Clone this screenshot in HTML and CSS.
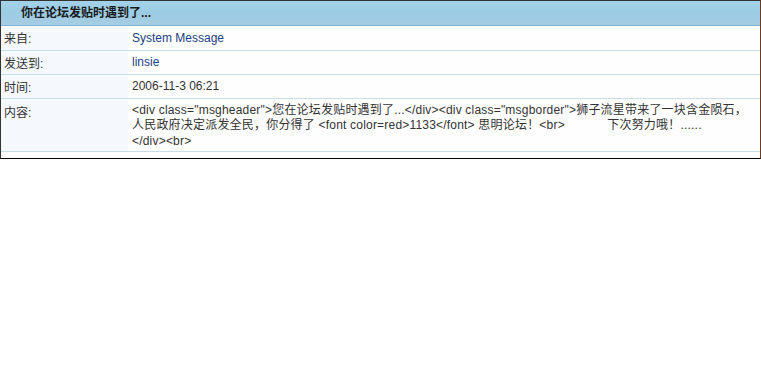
FILE: index.html
```html
<!DOCTYPE html>
<html lang="zh-CN">
<head>
    <meta charset="UTF-8">
    <title>短消息</title>
    <link rel="stylesheet" href="styles.css">
</head>
<body>

<div class="msgbox">
    <div class="msghead">你在论坛发贴时遇到了...</div>
    <table class="msgtable">
        <tr>
            <td class="label">来自:</td>
            <td class="value"><a href="#">System Message</a></td>
        </tr>
        <tr>
            <td class="label">发送到:</td>
            <td class="value"><a href="#">linsie</a></td>
        </tr>
        <tr>
            <td class="label">时间:</td>
            <td class="value">2006-11-3 06:21</td>
        </tr>
        <tr>
            <td class="label top">内容:</td>
            <td class="value content">&lt;div class="msgheader"&gt;您在论坛发贴时遇到了...&lt;/div&gt;&lt;div class="msgborder"&gt;狮子流星带来了一块含金陨石，<br>人民政府决定派发全民，你分得了 &lt;font color=red&gt;1133&lt;/font&gt; 思明论坛！&lt;br&gt;&nbsp;&nbsp;&nbsp;&nbsp;&nbsp;&nbsp;&nbsp;&nbsp;&nbsp;&nbsp;&nbsp;&nbsp;下次努力哦！......<br>&lt;/div&gt;&lt;br&gt;</td>
        </tr>
    </table>
</div>

</body>
</html>
```

FILE: styles.css
```css
* {
    box-sizing: border-box;
    margin: 0;
    padding: 0;
}

body {
    font-family: Tahoma, "Liberation Sans", "Noto Sans CJK SC", sans-serif;
    font-size: 12px;
    color: #333;
    background: #fff;
}

.msgbox {
    width: 761px;
    border: 1px solid #333;
    border-right-color: #6b3b22;
    border-bottom-color: #000;
    padding-bottom: 6px;
}

.msghead {
    height: 25px;
    line-height: 24px;
    padding-left: 20px;
    font-weight: bold;
    color: #1a1a1a;
    background: linear-gradient(#a3d2ea, #9ccbe4 50%, #a6cde2);
    border-bottom: 1px solid #7db4d6;
}

.msgtable {
    width: 100%;
    border-collapse: collapse;
}

.msgtable td {
    border-bottom: 1px solid #c8dde5;
    padding: 0 4px;
    height: 24px;
    vertical-align: middle;
}

.msgtable .label {
    width: 127px;
    padding-left: 3px;
    background: #f5f8fd;
}

.msgtable .top {
    vertical-align: top;
    padding-top: 4px;
}

.msgtable .value {
    background: #fefefe;
}

.msgtable .content {
    padding-top: 4px;
    padding-bottom: 2px;
    line-height: 15.5px;
    letter-spacing: 0.2px;
}

.value a {
    color: #1c3f86;
    text-decoration: none;
}
```
